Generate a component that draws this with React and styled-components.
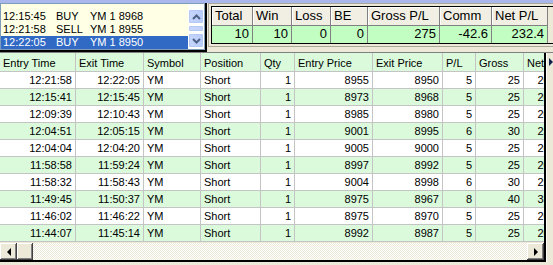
import styled, { createGlobalStyle } from "styled-components";

const GlobalStyle = createGlobalStyle`
  html, body { margin: 0; padding: 0; background: #ece9d8; }
  body { font-family: "Liberation Sans", Arial, sans-serif; }
`;

const orders = [
  { time: "12:15:45", side: "BUY", what: "YM 1 8968" },
  { time: "12:21:58", side: "SELL", what: "YM 1 8955" },
  { time: "12:22:05", side: "BUY", what: "YM 1 8950", selected: true },
];

const stats = [
  { label: "Total", value: "10", w: 41 },
  { label: "Win", value: "10", w: 39 },
  { label: "Loss", value: "0", w: 39 },
  { label: "BE", value: "0", w: 37 },
  { label: "Gross P/L", value: "275", w: 72 },
  { label: "Comm", value: "-42.6", w: 52 },
  { label: "Net P/L", value: "232.4", w: 56 },
];

const columns = [
  { label: "Entry Time", w: 76, align: "right" },
  { label: "Exit Time", w: 68, align: "right" },
  { label: "Symbol", w: 57, align: "left" },
  { label: "Position", w: 60, align: "left" },
  { label: "Qty", w: 34, align: "right" },
  { label: "Entry Price", w: 78, align: "right" },
  { label: "Exit Price", w: 70, align: "right" },
  { label: "P/L", w: 33, align: "right" },
  { label: "Gross", w: 48, align: "right" },
  { label: "Net", w: 45, align: "right" },
];

const trades = [
  ["12:21:58", "12:22:05", 8955, 8950],
  ["12:15:41", "12:15:45", 8973, 8968],
  ["12:09:39", "12:10:43", 8985, 8980],
  ["12:04:51", "12:05:15", 9001, 8995],
  ["12:04:04", "12:04:20", 9005, 9000],
  ["11:58:58", "11:59:24", 8997, 8992],
  ["11:58:32", "11:58:43", 9004, 8998],
  ["11:49:45", "11:50:37", 8975, 8967],
  ["11:46:02", "11:46:22", 8975, 8970],
  ["11:44:07", "11:45:14", 8992, 8987],
];

const Window = styled.div`
  width: 553px;
  height: 265px;
  overflow: hidden;
  background: #ece9d8;
  display: flex;
  flex-direction: column;
`;

const TopStrip = styled.div`
  height: 3px;
  flex-shrink: 0;
  background: #a9b7ec;
`;

const TopArea = styled.div`
  display: flex;
  height: 49px;
  flex-shrink: 0;
`;

const ListFrame = styled.div`
  width: 205px;
  height: 47px;
  border-right: 2px solid #000;
  border-bottom: 2px solid #000;
`;

const ListBox = styled.div`
  box-sizing: border-box;
  height: 47px;
  border: 1px solid #7f9db9;
  background: #ffffe6;
  display: flex;
`;

const Items = styled.div`
  flex: 1;
  padding-top: 6px;
`;

const Item = styled.div`
  height: 13px;
  line-height: 13px;
  font-size: 11px;
  display: flex;
  padding-left: 2px;
  background: ${(p) => (p.$selected ? "#316ac5" : "transparent")};
  color: ${(p) => (p.$selected ? "#fff" : "#000")};
`;

const ItemPart = styled.span`
  width: ${(p) => p.$w}px;
  white-space: pre;
`;

const VScroll = styled.div`
  width: 16px;
  display: flex;
  flex-direction: column;
  padding: 5px 0 1px 0;
  background: #fdfdfa;
`;

const XpButton = styled.div`
  box-sizing: border-box;
  height: 15px;
  border: 1px solid #fff;
  border-radius: 2px;
  background: linear-gradient(to right, #c6d5fc, #b8cbf9);
  box-shadow: inset 0 0 0 1px #b4c8f6;
  display: flex;
  align-items: center;
  justify-content: center;
`;

const XpTrack = styled.div`
  flex: 1;
  padding: 1px 0;
  display: flex;
`;

const XpThumb = styled.div`
  flex: 1;
  border: 1px solid #fff;
  border-radius: 2px;
  background: linear-gradient(to right, #cad8fc, #bfd0fa);
  box-shadow: inset 0 0 0 1px #b4c8f6;
`;

const Gap = styled.div`
  width: 1px;
`;

const StatsFrame = styled.div`
  flex: 1;
  height: 44px;
  box-sizing: border-box;
  border: 1px solid #aca899;
  border-right: none;
  padding: 2px 0 2px 2px;
`;

const StatsTable = styled.div`
  height: 38px;
  box-sizing: border-box;
  border: 1px solid #000;
  border-right: none;
  display: flex;
  flex-direction: column;
`;

const StatsRow = styled.div`
  display: flex;
  height: ${(p) => (p.$head ? 19 : 17)}px;
`;

const StatsCell = styled.div`
  box-sizing: border-box;
  width: ${(p) => p.$w}px;
  flex-shrink: 0;
  font-size: 13px;
  padding: 0 3px;
  line-height: ${(p) => (p.$head ? 18 : 16)}px;
  text-align: ${(p) => (p.$head ? "left" : "right")};
  background: ${(p) => (p.$head ? "#f1efe4" : "#c2fdc2")};
  border-right: 1px solid #808080;
  border-bottom: ${(p) => (p.$head ? "1px solid #808080" : "none")};
  box-shadow: ${(p) => (p.$head ? "inset 1px 1px #fff" : "none")};
`;

const GridArea = styled.div`
  display: flex;
  border-top: 1px solid #808080;
  height: 209px;
  flex-shrink: 0;
`;

const GridView = styled.div`
  width: 544px;
  display: flex;
  flex-direction: column;
  overflow: hidden;
  border-bottom: 2px solid #000;
`;

const Rows = styled.div`
  display: flex;
  flex-direction: column;
`;

const Row = styled.div`
  display: flex;
  height: ${(p) => (p.$head ? 19 : 17)}px;
  background: ${(p) => (p.$alt || p.$head ? "#dafadb" : "#fff")};
`;

const Cell = styled.div`
  box-sizing: border-box;
  width: ${(p) => p.$w}px;
  flex-shrink: 0;
  font-size: 11px;
  line-height: 16px;
  padding: ${(p) => (p.$head ? "2px 3px 0" : "0 3px")};
  white-space: nowrap;
  overflow: hidden;
  text-align: ${(p) => p.$align};
  border-right: 1px solid #c4c4c4;
  border-bottom: 1px solid #c4c4c4;
  color: #000;
`;

const HScroll = styled.div`
  display: flex;
  height: 17px;
  margin-top: 1px;
`;

const ClassicButton = styled.div`
  box-sizing: border-box;
  width: ${(p) => p.$w || 17}px;
  height: 17px;
  flex-shrink: 0;
  background: #ece9d8;
  box-shadow: inset -1px -1px #404040, inset 1px 1px #fff, inset -2px -2px #808080;
  display: flex;
  align-items: center;
  justify-content: center;
`;

const DitherTrack = styled.div`
  flex: 1;
  background-color: #ece9d8;
  background-image: conic-gradient(#fff 25%, #ece9d8 0 50%, #fff 0 75%, #ece9d8 0);
  background-size: 2px 2px;
`;

const Divider = styled.div`
  width: 2px;
  background: #000;
`;

const SideStrip = styled.div`
  flex: 1;
  background: #ece9d8;
  box-shadow: inset 1px 0 #fff;
  padding-top: 5px;
`;

const SideArrow = styled.div`
  width: 0;
  height: 0;
  margin-left: 3px;
  border-top: 4px solid transparent;
  border-bottom: 4px solid transparent;
  border-left: 4px solid #10204a;
`;

const Triangle = styled.div`
  width: 0;
  height: 0;
  border-top: 4px solid transparent;
  border-bottom: 4px solid transparent;
  ${(p) =>
    p.$dir === "left"
      ? "border-right: 4px solid #000;"
      : "border-left: 4px solid #000;"}
`;

const Chevron = ({ up }) => (
  <svg width="9" height="6" viewBox="0 0 9 6">
    <polyline
      points={up ? "1,5 4.5,1.5 8,5" : "1,1 4.5,4.5 8,1"}
      fill="none"
      stroke="#4d6185"
      strokeWidth="2"
    />
  </svg>
);

const App = () => {
  return (
    <Window>
      <GlobalStyle />
      <TopStrip />
      <TopArea>
        <ListFrame>
          <ListBox>
            <Items>
              {orders.map((o) => (
                <Item key={o.time} $selected={o.selected}>
                  <ItemPart $w={53}>{o.time}</ItemPart>
                  <ItemPart $w={34}>{o.side}</ItemPart>
                  <ItemPart>{o.what}</ItemPart>
                </Item>
              ))}
            </Items>
            <VScroll>
              <XpButton>
                <Chevron up />
              </XpButton>
              <XpTrack>
                <XpThumb />
              </XpTrack>
              <XpButton>
                <Chevron />
              </XpButton>
            </VScroll>
          </ListBox>
        </ListFrame>
        <Gap />
        <StatsFrame>
          <StatsTable>
            <StatsRow $head>
              {stats.map((s) => (
                <StatsCell key={s.label} $w={s.w} $head>
                  {s.label}
                </StatsCell>
              ))}
            </StatsRow>
            <StatsRow>
              {stats.map((s) => (
                <StatsCell key={s.label} $w={s.w}>
                  {s.value}
                </StatsCell>
              ))}
            </StatsRow>
          </StatsTable>
        </StatsFrame>
      </TopArea>
      <GridArea>
        <GridView>
          <Rows>
            <Row $head>
              {columns.map((c) => (
                <Cell key={c.label} $w={c.w} $align="left" $head>
                  {c.label}
                </Cell>
              ))}
            </Row>
            {trades.map((t, i) => {
              const pl = t[2] - t[3];
              const gross = pl * 5;
              const values = [
                t[0],
                t[1],
                "YM",
                "Short",
                "1",
                t[2],
                t[3],
                pl,
                gross,
                (gross - 4.26).toFixed(2),
              ];
              return (
                <Row key={t[0]} $alt={i % 2 === 1}>
                  {columns.map((c, j) => (
                    <Cell key={c.label} $w={c.w} $align={c.align}>
                      {values[j]}
                    </Cell>
                  ))}
                </Row>
              );
            })}
          </Rows>
          <HScroll>
            <ClassicButton>
              <Triangle $dir="left" />
            </ClassicButton>
            <ClassicButton $w={16} />
            <DitherTrack />
            <ClassicButton>
              <Triangle $dir="right" />
            </ClassicButton>
          </HScroll>
        </GridView>
        <Divider />
        <SideStrip>
          <SideArrow />
        </SideStrip>
      </GridArea>
    </Window>
  );
};

export default App;
